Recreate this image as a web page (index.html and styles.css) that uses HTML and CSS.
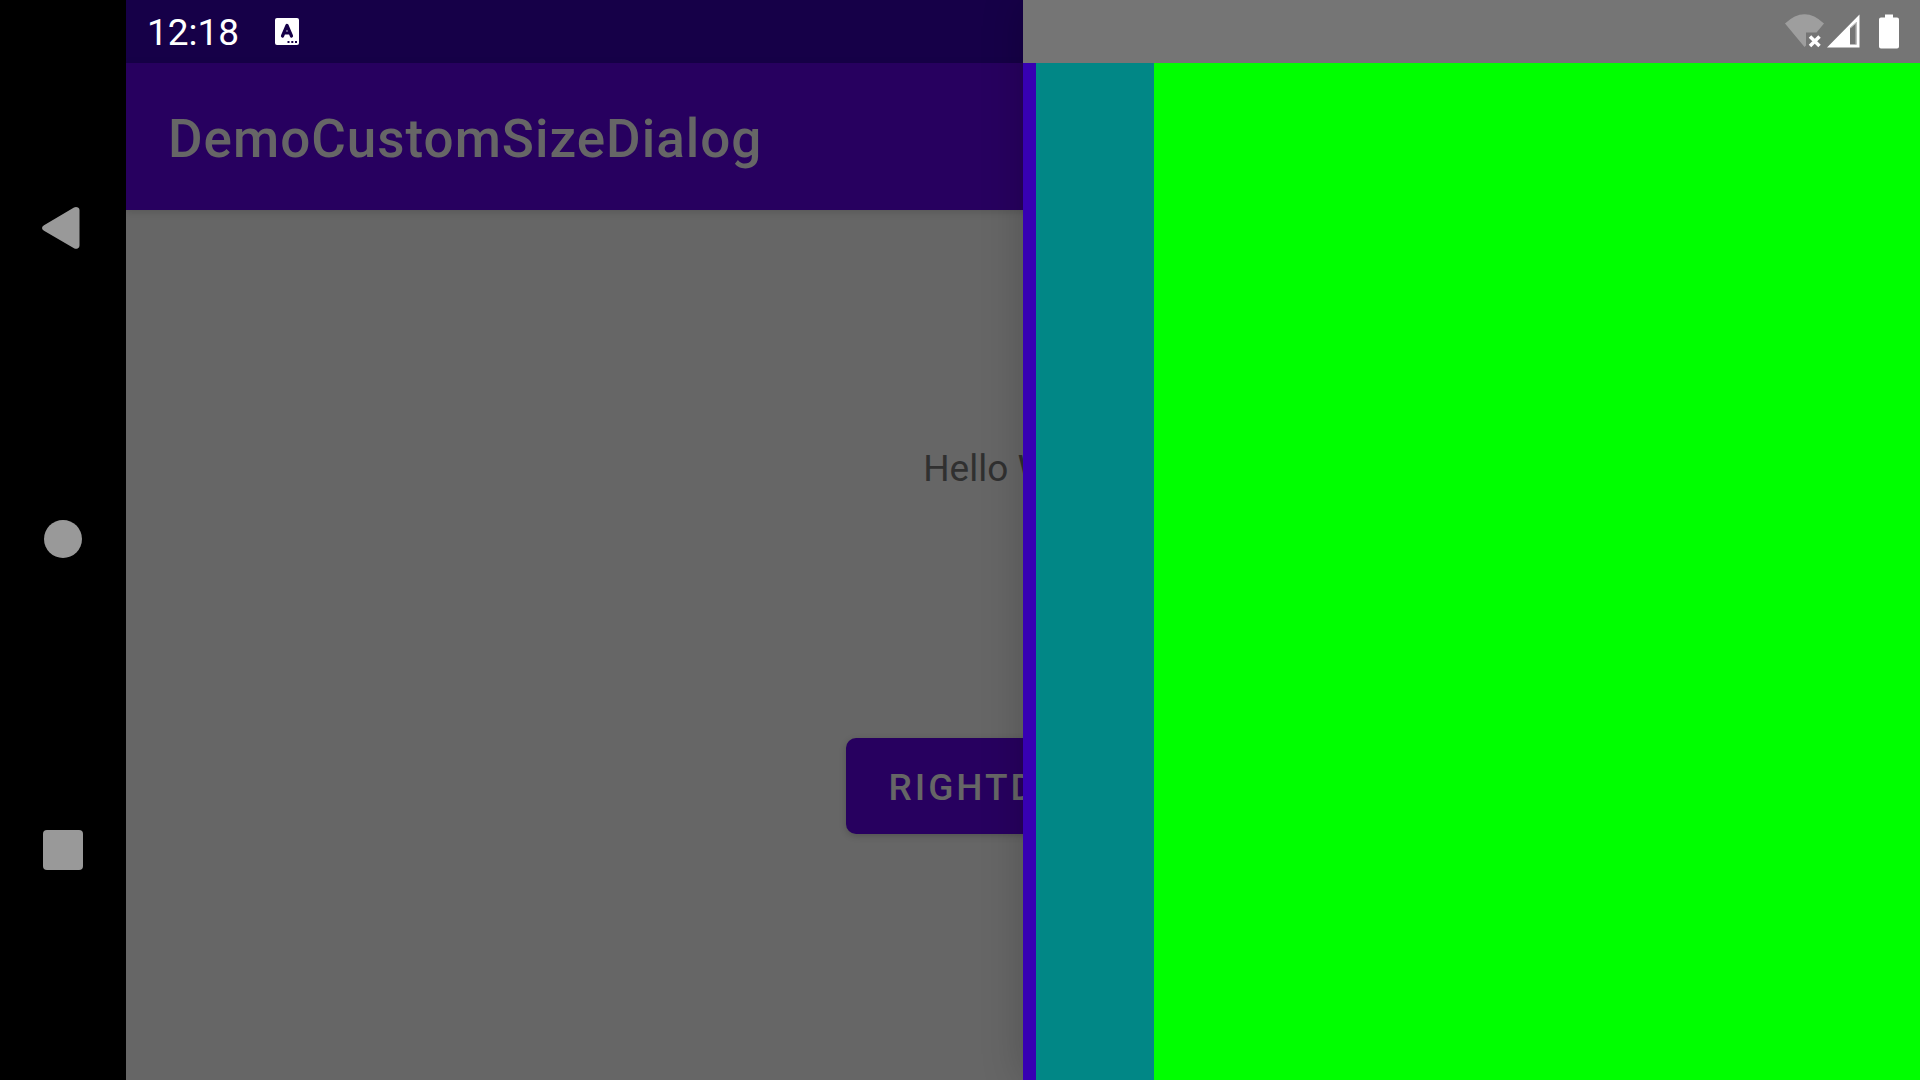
FILE: index.html
```html
<!DOCTYPE html>
<html lang="en">
<head>
<meta charset="utf-8">
<title>DemoCustomSizeDialog</title>
<link rel="stylesheet" href="styles.css">
</head>
<body>
<div class="device">
  <nav class="nav-bar" aria-label="System navigation">
    <button class="nav-button" type="button" aria-label="Back">
      <svg width="42" height="46" viewBox="2 0 42 46"><path d="M4 20.300L34 2.600Q36 1.500 38 2.600Q39.500 3.500 39.500 5V40.500Q39.500 42.500 38 43.200Q36 44.500 34 43.200L4 25.700Q2 24.500 2 23Q2 21.500 4 20.300Z"/></svg>
    </button>
    <button class="nav-button" type="button" aria-label="Home">
      <svg width="42" height="42" viewBox="0 0 42 42"><circle cx="21" cy="21" r="19"/></svg>
    </button>
    <button class="nav-button" type="button" aria-label="Recent apps">
      <svg width="42" height="42" viewBox="0 0 42 42"><rect x="1" y="1" width="40" height="40" rx="4"/></svg>
    </button>
  </nav>
  <div class="screen">
    <div class="status-bar">
      <time class="clock">12:18</time>
      <svg class="notice" width="24" height="27" viewBox="0 0 24 27" aria-hidden="true">
        <rect width="24" height="27" rx="2" fill="#fff"/>
        <path d="M7.500 18L12 7.500L16.500 18M9 15H15" fill="none" stroke="#160048" stroke-width="3.200" stroke-linecap="round" stroke-linejoin="round"/>
        <path d="M12.500 23h2v2h-2zM16.300 23h2v2h-2zM20 23h2v2h-2z" fill="#160048"/>
      </svg>
    </div>
    <header class="app-bar"><h1 class="app-title">DemoCustomSizeDialog</h1></header>
    <main class="content">
      <p class="greeting">Hello World!</p>
      <button class="open-button" type="button">RIGHTDIALOG</button>
    </main>
    <div class="dialog" role="dialog" aria-label="Right dialog">
      <div class="dialog-status">
        <svg width="120" height="36" viewBox="0 0 120 36" aria-hidden="true">
          <path d="M5 9.500Q24.500 -9 44 9.500L36.500 18.500H26V31.500L24.500 33Z" fill="#9e9e9e"/>
          <path d="M30 22.500L39.500 32M39.500 22.500L30 32" stroke="#fff" stroke-width="3.500"/>
          <path fill-rule="evenodd" d="M47 33.500L79.500 0.500V33.500ZM70 14V30.500H76.500V8Z" fill="#fff"/>
          <path d="M70.500 14L76 9V30.500H70" fill="none" stroke="#bdbdbd" stroke-width="1"/>
          <path d="M105 0.500H113V3.500H117Q119 3.500 119 5.500V32.500Q119 34.500 117 34.500H101Q99 34.500 99 32.500V5.500Q99 3.500 101 3.500H105Z" fill="#fff"/>
        </svg>
      </div>
      <div class="panel"><div class="panel-inner"></div></div>
    </div>
  </div>
</div>
</body>
</html>
```
FILE: styles.css
```css
* {
  box-sizing: border-box;
}

body {
  margin: 0;
  font-family: Roboto, "Noto Sans", sans-serif;
  background: #000;
}

button {
  border: 0;
  font-family: inherit;
}

.device {
  display: flex;
  min-height: 100vh;
}

.nav-bar {
  display: flex;
  flex-direction: column;
  flex: 0 0 126px;
  padding: 72px 0 74px;
  background: #000;
}

.nav-button {
  display: flex;
  flex: 1;
  align-items: center;
  justify-content: center;
  padding: 0;
  background: none;
}

.nav-button svg {
  fill: #999;
}

.screen {
  position: relative;
  display: flex;
  flex: 1;
  flex-direction: column;
  min-width: 0;
  overflow: hidden;
  background: #666;
}

.status-bar {
  display: flex;
  align-items: center;
  gap: 36px;
  height: 63px;
  padding: 0 21px;
  background: #160048;
}

.clock {
  padding-top: 2px;
  color: #fff;
  font-size: 37px;
  line-height: 44px;
}

.app-bar {
  display: flex;
  align-items: center;
  height: 147px;
  padding: 4px 42px 0;
  background: #27005f;
  box-shadow: 0 2px 8px rgba(0, 0, 0, 0.15);
}

.app-title {
  margin: 0;
  color: #666;
  font-size: 53px;
  font-weight: 500;
  letter-spacing: 1px;
  line-height: 62px;
}

.content {
  display: flex;
  flex: 1;
  flex-direction: column;
  align-items: center;
  justify-content: space-evenly;
  padding-top: 2px;
}

.greeting {
  margin: 0;
  padding-top: 2px;
  color: #303030;
  font-size: 37px;
  line-height: 48px;
}

.open-button {
  height: 96px;
  margin: 15px 0;
  padding: 2px 42px 0;
  border-radius: 10px;
  background: #27005f;
  box-shadow: 0 2px 7px rgba(0, 0, 0, 0.2);
  color: #666;
  font-size: 37px;
  font-weight: 500;
  letter-spacing: 3px;
}

.dialog {
  position: absolute;
  inset: 0 0 0 50%;
  display: flex;
  flex-direction: column;
  box-shadow: 0 0 40px rgba(0, 0, 0, 0.2);
}

.dialog-status {
  display: flex;
  align-items: center;
  justify-content: flex-end;
  height: 63px;
  padding: 0 20px;
  background: #757575;
}

.panel {
  display: flex;
  flex: 1;
  padding-left: 13px;
  background: #3700b3;
}

.panel-inner {
  flex: 1;
  border-left: 118px solid #018786;
  background: #0f0;
}
```
